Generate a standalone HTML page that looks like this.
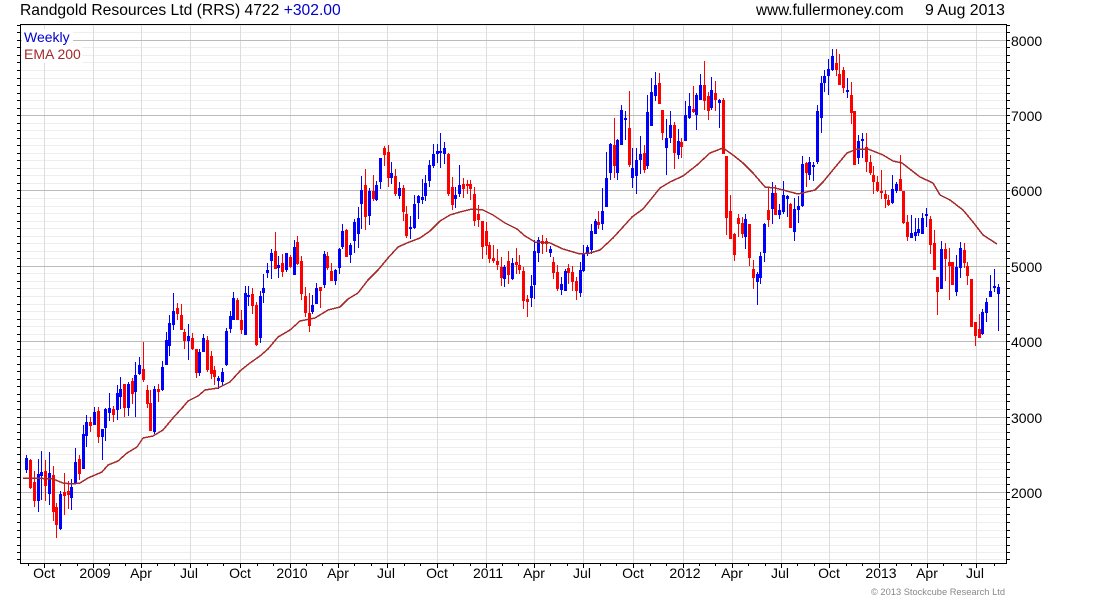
<!DOCTYPE html>
<html><head><meta charset="utf-8"><title>Randgold Resources Ltd (RRS)</title>
<style>
html,body{margin:0;padding:0;background:#fff;width:1100px;height:600px;overflow:hidden}
svg{display:block;font-family:"Liberation Sans",Arial,sans-serif}
text{fill:#000}
</style></head><body>
<svg width="1100" height="600" viewBox="0 0 1100 600">
<g shape-rendering="crispEdges" fill="none">
<path stroke="#eee" d="M21 25.5H1006M21 32.5H1006M21 47.5H1006M21 55.5H1006M21 62.5H1006M21 70.5H1006M21 78.5H1006M21 85.5H1006M21 93.5H1006M21 100.5H1006M21 108.5H1006M21 123.5H1006M21 130.5H1006M21 138.5H1006M21 145.5H1006M21 153.5H1006M21 160.5H1006M21 168.5H1006M21 175.5H1006M21 183.5H1006M21 198.5H1006M21 206.5H1006M21 213.5H1006M21 221.5H1006M21 228.5H1006M21 236.5H1006M21 243.5H1006M21 251.5H1006M21 258.5H1006M21 273.5H1006M21 281.5H1006M21 288.5H1006M21 296.5H1006M21 304.5H1006M21 311.5H1006M21 319.5H1006M21 326.5H1006M21 334.5H1006M21 349.5H1006M21 356.5H1006M21 364.5H1006M21 371.5H1006M21 379.5H1006M21 386.5H1006M21 394.5H1006M21 401.5H1006M21 409.5H1006M21 424.5H1006M21 432.5H1006M21 439.5H1006M21 447.5H1006M21 454.5H1006M21 462.5H1006M21 469.5H1006M21 477.5H1006M21 484.5H1006M21 499.5H1006M21 507.5H1006M21 514.5H1006M21 522.5H1006M21 530.5H1006M21 537.5H1006M21 545.5H1006M21 552.5H1006M21 559.5H1006"/>
<path stroke="#ddd" d="M44.5 25V563M93.5 25V563M141.5 25V563M190.5 25V563M240.5 25V563M290.5 25V563M338.5 25V563M387.5 25V563M437.5 25V563M486.5 25V563M534.5 25V563M583.5 25V563M633.5 25V563M683.5 25V563M732.5 25V563M781.5 25V563M829.5 25V563M879.5 25V563M927.5 25V563M976.5 25V563"/>
<path stroke="#bbb" d="M21 40.5H1006M21 115.5H1006M21 190.5H1006M21 266.5H1006M21 341.5H1006M21 417.5H1006M21 492.5H1006"/>

<path stroke="#00f" d="M26.5 455V473M38.5 459V512M41.5 451V500M49.5 452V505M60.5 491V530M71.5 479V510M75.5 448V484M83.5 425V469M86.5 415V447M94.5 407V425M102.5 429V460M105.5 408V441M109.5 393V421M117.5 385V420M120.5 377V409M128.5 382V416M135.5 362V417M139.5 357V375M154.5 386V434M162.5 361V391M166.5 332V365M169.5 315V356M173.5 293V330M188.5 324V360M199.5 349V376M203.5 334V352M218.5 376V389M222.5 368V386M226.5 328V366M230.5 311V333M233.5 292V320M245.5 286V335M248.5 286V306M260.5 291V343M263.5 274V303M267.5 263V278M271.5 249V279M278.5 256V278M286.5 253V272M294.5 240V275M312.5 295V314M316.5 283V304M324.5 251V288M335.5 269V285M339.5 248V274M342.5 224V249M350.5 243V263M354.5 219V253M358.5 207V248M361.5 176V229M369.5 188V225M376.5 181V201M380.5 158V189M391.5 162V184M399.5 182V199M410.5 216V239M414.5 195V229M418.5 195V219M422.5 179V204M425.5 175V201M429.5 160V187M433.5 144V168M437.5 144V163M440.5 133V168M444.5 142V164M455.5 187V208M459.5 165V197M504.5 265V287M512.5 258V280M531.5 275V307M534.5 240V299M538.5 237V262M550.5 246V257M561.5 277V295M565.5 269V291M580.5 262V297M583.5 245V272M587.5 245V256M591.5 224V254M595.5 219V234M602.5 188V230M606.5 152V207M610.5 143V180M617.5 139V180M621.5 105V145M625.5 111V140M632.5 148V188M636.5 148V194M640.5 136V174M647.5 95V169M651.5 78V126M655.5 72V101M666.5 119V175M670.5 111V143M678.5 129V159M685.5 101V141M689.5 93V119M696.5 93V130M700.5 74V100M711.5 77V110M719.5 99V128M745.5 214V249M757.5 272V305M760.5 252V284M764.5 223V262M772.5 182V224M779.5 204V219M783.5 181V214M787.5 195V217M794.5 198V241M798.5 196V223M802.5 156V207M809.5 157V180M813.5 162V181M817.5 105V164M821.5 76V133M824.5 70V92M828.5 59V95M832.5 49V71M847.5 78V98M858.5 135V164M862.5 133V158M892.5 175V204M896.5 182V193M911.5 215V238M915.5 218V241M918.5 218V236M922.5 213V234M926.5 208V227M941.5 241V289M956.5 255V296M960.5 242V278M982.5 309V335M986.5 298V322M990.5 275V297M994.5 269V292M998.5 284V331"/>
<path stroke="#f00" d="M30.5 459V489M34.5 471V507M45.5 460V501M53.5 466V521M56.5 503V538M64.5 473V515M68.5 481V509M79.5 455V480M90.5 417V432M98.5 407V443M113.5 406V422M124.5 384V417M132.5 378V404M143.5 342V382M147.5 385V408M150.5 390V431M158.5 384V402M177.5 303V320M181.5 304V330M184.5 329V349M192.5 333V350M196.5 349V378M207.5 336V372M211.5 351V379M214.5 366V385M237.5 298V320M241.5 310V334M252.5 288V314M256.5 302V346M275.5 232V269M282.5 254V277M290.5 255V268M297.5 236V265M301.5 256V300M305.5 287V317M309.5 293V332M320.5 287V308M327.5 252V270M331.5 263V281M346.5 229V257M365.5 169V230M373.5 175V201M384.5 146V166M388.5 145V187M395.5 169V196M403.5 185V221M406.5 206V238M448.5 153V196M452.5 177V210M463.5 178V198M467.5 180V194M470.5 180V200M474.5 187V226M478.5 205V227M482.5 221V259M486.5 222V255M489.5 242V263M493.5 245V263M497.5 249V270M501.5 257V286M508.5 251V284M516.5 248V274M519.5 255V274M523.5 267V309M527.5 295V317M542.5 235V254M546.5 238V252M553.5 257V279M557.5 265V291M568.5 264V284M572.5 266V291M576.5 277V300M598.5 211V229M614.5 118V178M629.5 91V167M644.5 145V173M659.5 73V104M662.5 110V140M674.5 122V169M681.5 138V158M693.5 86V113M704.5 61V110M708.5 92V120M715.5 81V111M723.5 98V154M726.5 156V235M730.5 195V239M734.5 233V261M738.5 214V237M742.5 217V238M749.5 224V266M753.5 260V289M768.5 188V227M775.5 185V215M790.5 203V228M806.5 162V187M836.5 49V76M839.5 54V85M843.5 67V93M851.5 82V124M854.5 111V165M866.5 133V172M870.5 155V175M873.5 166V194M877.5 176V192M881.5 170V199M885.5 190V208M888.5 195V206M900.5 155V191M903.5 191V224M907.5 215V241M930.5 216V254M934.5 230V270M937.5 277V315M945.5 243V281M949.5 248V300M952.5 262V285M964.5 243V268M967.5 262V285M971.5 279V327M975.5 322V346M979.5 314V338"/>
<path stroke="#00f" stroke-width="3" d="M26.5 458V470M38.5 474V501M41.5 472V476M49.5 473V494M60.5 494V529M71.5 487V498M75.5 462V483M83.5 434V469M86.5 422V436M94.5 412V425M102.5 429V437M105.5 409V428M109.5 408V413M117.5 393V410M120.5 389V397M128.5 384V408M135.5 375V392M139.5 365V374M154.5 389V432M162.5 367V390M166.5 340V365M169.5 323V346M173.5 311V325M188.5 336V341M199.5 352V373M203.5 338V352M218.5 378V381M222.5 372V382M226.5 331V365M230.5 316V329M233.5 298V320M245.5 293V335M248.5 295V297M260.5 296V338M263.5 288V293M267.5 270V273M271.5 253V261M278.5 265V268M286.5 253V270M294.5 247V275M312.5 305V312M316.5 288V304M324.5 254V285M335.5 270V281M339.5 249V268M342.5 231V247M350.5 245V255M354.5 222V241M358.5 218V234M361.5 190V204M369.5 191V216M376.5 185V200M380.5 158V182M391.5 173V178M399.5 188V196M410.5 227V229M414.5 204V228M418.5 196V203M422.5 197V200M425.5 183V196M429.5 165V181M433.5 154V166M437.5 151V154M440.5 151V153M444.5 148V154M455.5 195V199M459.5 185V194M504.5 267V279M512.5 263V279M531.5 286V298M534.5 251V285M538.5 240V253M550.5 249V253M561.5 284V290M565.5 271V291M580.5 270V293M583.5 253V271M587.5 247V254M591.5 231V250M595.5 221V234M602.5 211V224M606.5 178V207M610.5 144V173M617.5 140V173M621.5 110V145M625.5 118V120M632.5 168V178M636.5 160V176M640.5 154V160M647.5 112V166M651.5 92V126M655.5 85V96M666.5 138V148M670.5 125V138M678.5 141V155M685.5 115V141M689.5 106V118M696.5 95V115M700.5 85V100M711.5 90V108M719.5 100V103M745.5 219V237M757.5 274V282M760.5 256V278M764.5 224V253M772.5 193V209M779.5 210V215M783.5 195V212M787.5 196V199M794.5 209V232M798.5 206V210M802.5 164V206M809.5 162V175M813.5 165V167M817.5 111V162M821.5 83V118M824.5 76V83M828.5 69V76M832.5 56V70M847.5 90V92M858.5 141V158M862.5 139V141M892.5 189V203M896.5 184V191M911.5 233V238M915.5 232V236M918.5 229V233M922.5 218V234M926.5 214V216M941.5 249V289M956.5 267V292M960.5 248V268M982.5 312V334M986.5 302V313M990.5 291V297M994.5 286V288M998.5 287V294"/>
<path stroke="#f00" stroke-width="3" d="M30.5 460V488M34.5 482V501M45.5 471V486M53.5 475V512M56.5 507V525M64.5 492V496M68.5 491V495M79.5 459V474M90.5 422V426M98.5 411V437M113.5 409V415M124.5 384V408M132.5 381V394M143.5 369V380M147.5 390V404M150.5 403V431M158.5 389V392M177.5 308V314M181.5 315V330M184.5 332V341M192.5 338V349M196.5 349V373M207.5 340V370M211.5 356V374M214.5 370V377M237.5 300V320M241.5 320V330M252.5 294V306M256.5 305V345M275.5 251V269M282.5 263V272M290.5 257V267M297.5 242V264M301.5 261V294M305.5 296V313M309.5 313V326M320.5 287V291M327.5 256V268M331.5 271V281M346.5 230V257M365.5 185V217M373.5 191V199M384.5 148V155M388.5 152V178M395.5 176V194M403.5 188V212M406.5 214V236M448.5 154V194M452.5 187V205M463.5 184V189M467.5 184V186M470.5 184V189M474.5 194V221M478.5 214V220M482.5 221V247M486.5 231V246M489.5 245V259M493.5 258V261M497.5 261V265M501.5 267V278M508.5 261V275M516.5 262V265M519.5 265V270M523.5 271V301M527.5 299V302M542.5 241V244M546.5 241V244M553.5 262V273M557.5 272V289M568.5 268V273M572.5 272V282M576.5 281V291M598.5 222V225M614.5 145V166M629.5 128V165M644.5 153V170M659.5 83V104M662.5 110V133M674.5 125V153M681.5 142V147M693.5 109V112M704.5 85V101M708.5 96V111M715.5 93V100M723.5 100V154M726.5 156V218M730.5 211V239M734.5 234V255M738.5 218V224M742.5 223V234M749.5 224V258M753.5 269V278M768.5 210V220M775.5 193V215M790.5 204V228M806.5 163V173M836.5 63V70M839.5 74V85M843.5 70V88M851.5 95V113M854.5 111V165M866.5 147V162M870.5 162V173M873.5 175V182M877.5 182V191M881.5 191V193M885.5 194V199M888.5 200V205M900.5 179V191M903.5 191V223M907.5 222V237M930.5 219V245M934.5 243V270M937.5 277V292M945.5 249V259M949.5 262V266M952.5 262V285M964.5 250V263M967.5 266V276M971.5 279V327M975.5 322V336M979.5 329V338"/>

<polyline stroke="#a52a2a" stroke-width="1.5" points="23,478 33,478 53,479 63,483 72,484 80,483 88,478 102,472 108,465 118,461 127,453 137,447 143,438 153,436 163,430 173,418 183,407 188,401 198,396 205,390 218,388 230,382 240,371 250,363 260,356 268,349 278,337 290,330 300,321 315,318 328,310 340,307 348,299 358,293 368,280 378,270 388,258 398,247 407,243 420,238 430,231 440,221 450,215 460,212 472,209 483,210 493,215 505,223 517,229 525,236 535,242 550,243 563,249 580,254 590,253 600,250 613,238 623,227 632,217 643,209 652,198 660,188 670,182 683,176 697,165 710,153 723,148 733,155 743,163 753,173 765,187 775,188 783,190 798,194 815,190 823,182 837,165 847,153 857,149 868,149 883,155 893,161 902,163 920,177 933,183 940,195 950,200 963,210 973,222 983,235 997,244"/>

<rect x="22" y="29" width="51" height="17" fill="#fff" stroke="none"/>
<rect x="22" y="46" width="60" height="17" fill="#fff" stroke="none"/>

<path stroke="#000" d="M20.5 24V564M20 24.5H1007M1006.5 24V564M20 563.5H1007"/>
<path stroke="#000" d="M17 25.5H20M17 32.5H20M17 40.5H20M17 47.5H20M17 55.5H20M17 62.5H20M17 70.5H20M17 78.5H20M17 85.5H20M17 93.5H20M17 100.5H20M17 108.5H20M17 115.5H20M17 123.5H20M17 130.5H20M17 138.5H20M17 145.5H20M17 153.5H20M17 160.5H20M17 168.5H20M17 175.5H20M17 183.5H20M17 190.5H20M17 198.5H20M17 206.5H20M17 213.5H20M17 221.5H20M17 228.5H20M17 236.5H20M17 243.5H20M17 251.5H20M17 258.5H20M17 266.5H20M17 273.5H20M17 281.5H20M17 288.5H20M17 296.5H20M17 304.5H20M17 311.5H20M17 319.5H20M17 326.5H20M17 334.5H20M17 341.5H20M17 349.5H20M17 356.5H20M17 364.5H20M17 371.5H20M17 379.5H20M17 386.5H20M17 394.5H20M17 401.5H20M17 409.5H20M17 417.5H20M17 424.5H20M17 432.5H20M17 439.5H20M17 447.5H20M17 454.5H20M17 462.5H20M17 469.5H20M17 477.5H20M17 484.5H20M17 492.5H20M17 499.5H20M17 507.5H20M17 514.5H20M17 522.5H20M17 530.5H20M17 537.5H20M17 545.5H20M17 552.5H20M17 559.5H20"/>
<path stroke="#000" d="M1007 25.5H1010M1007 32.5H1010M1007 40.5H1010M1007 47.5H1010M1007 55.5H1010M1007 62.5H1010M1007 70.5H1010M1007 78.5H1010M1007 85.5H1010M1007 93.5H1010M1007 100.5H1010M1007 108.5H1010M1007 115.5H1010M1007 123.5H1010M1007 130.5H1010M1007 138.5H1010M1007 145.5H1010M1007 153.5H1010M1007 160.5H1010M1007 168.5H1010M1007 175.5H1010M1007 183.5H1010M1007 190.5H1010M1007 198.5H1010M1007 206.5H1010M1007 213.5H1010M1007 221.5H1010M1007 228.5H1010M1007 236.5H1010M1007 243.5H1010M1007 251.5H1010M1007 258.5H1010M1007 266.5H1010M1007 273.5H1010M1007 281.5H1010M1007 288.5H1010M1007 296.5H1010M1007 304.5H1010M1007 311.5H1010M1007 319.5H1010M1007 326.5H1010M1007 334.5H1010M1007 341.5H1010M1007 349.5H1010M1007 356.5H1010M1007 364.5H1010M1007 371.5H1010M1007 379.5H1010M1007 386.5H1010M1007 394.5H1010M1007 401.5H1010M1007 409.5H1010M1007 417.5H1010M1007 424.5H1010M1007 432.5H1010M1007 439.5H1010M1007 447.5H1010M1007 454.5H1010M1007 462.5H1010M1007 469.5H1010M1007 477.5H1010M1007 484.5H1010M1007 492.5H1010M1007 499.5H1010M1007 507.5H1010M1007 514.5H1010M1007 522.5H1010M1007 530.5H1010M1007 537.5H1010M1007 545.5H1010M1007 552.5H1010M1007 559.5H1010"/>
<path stroke="#000" d="M44.5 564V568M93.5 564V568M141.5 564V568M190.5 564V568M240.5 564V568M290.5 564V568M338.5 564V568M387.5 564V568M437.5 564V568M486.5 564V568M534.5 564V568M583.5 564V568M633.5 564V568M683.5 564V568M732.5 564V568M781.5 564V568M829.5 564V568M879.5 564V568M927.5 564V568M976.5 564V568"/>
<path stroke="#000" d="M28.5 564V566M60.5 564V566M77.5 564V566M109.5 564V566M125.5 564V566M157.5 564V566M174.5 564V566M207.5 564V566M223.5 564V566M257.5 564V566M273.5 564V566M306.5 564V566M322.5 564V566M354.5 564V566M371.5 564V566M404.5 564V566M420.5 564V566M453.5 564V566M470.5 564V566M502.5 564V566M518.5 564V566M550.5 564V566M567.5 564V566M600.5 564V566M616.5 564V566M650.5 564V566M666.5 564V566M699.5 564V566M715.5 564V566M748.5 564V566M765.5 564V566M797.5 564V566M814.5 564V566M846.5 564V566M862.5 564V566M896.5 564V566M911.5 564V566M943.5 564V566M961.5 564V566M994.5 564V566"/>
</g>

<text x="20" y="15" font-size="15.66">Randgold Resources Ltd (RRS) 4722 <tspan style="fill:#0000cd">+302.00</tspan></text>
<text x="756" y="15" font-size="15.3">www.fullermoney.com</text>
<text x="925" y="15" font-size="15.8">9 Aug 2013</text>
<text x="24" y="42" font-size="14" style="fill:#0000cd">Weekly</text>
<text x="24" y="59" font-size="14" style="fill:#a52a2a">EMA 200</text>

<g font-size="14">
<text x="1011" y="46">8000</text>
<text x="1011" y="121">7000</text>
<text x="1011" y="196">6000</text>
<text x="1011" y="272">5000</text>
<text x="1011" y="347">4000</text>
<text x="1011" y="423">3000</text>
<text x="1011" y="498">2000</text>
</g>
<g font-size="14" text-anchor="middle">
<text x="44" y="578">Oct</text>
<text x="95" y="578">2009</text>
<text x="141" y="578">Apr</text>
<text x="189" y="578">Jul</text>
<text x="240" y="578">Oct</text>
<text x="292" y="578">2010</text>
<text x="338" y="578">Apr</text>
<text x="386" y="578">Jul</text>
<text x="437" y="578">Oct</text>
<text x="488" y="578">2011</text>
<text x="534" y="578">Apr</text>
<text x="582" y="578">Jul</text>
<text x="633" y="578">Oct</text>
<text x="685" y="578">2012</text>
<text x="732" y="578">Apr</text>
<text x="780" y="578">Jul</text>
<text x="829" y="578">Oct</text>
<text x="881" y="578">2013</text>
<text x="927" y="578">Apr</text>
<text x="975" y="578">Jul</text>
</g>
<text x="1005" y="595" font-size="9.3" text-anchor="end" style="fill:#888">© 2013 Stockcube Research Ltd</text>
</svg>
</body></html>
